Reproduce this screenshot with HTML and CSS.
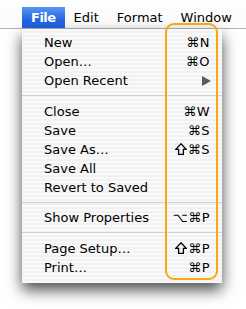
FILE: index.html
```html
<!DOCTYPE html>
<html lang="en">
<head>
    <meta charset="UTF-8">
    <meta name="viewport" content="width=device-width, initial-scale=1.0">
    <title>File menu</title>
    <link rel="stylesheet" href="styles.css">
</head>
<body>
    <div class="screen">
        <div class="menubar">
            <span class="title active">File</span>
            <span class="title">Edit</span>
            <span class="title">Format</span>
            <span class="title">Window</span>
        </div>

        <div class="menu">
            <div class="item"><span>New</span><span class="key">⌘N</span></div>
            <div class="item"><span>Open…</span><span class="key">⌘O</span></div>
            <div class="item"><span>Open Recent</span>
                <svg class="arrow" width="9" height="10" viewBox="0 0 9 10"><polygon points="0,0 9,5 0,10" /></svg>
            </div>
            <div class="sep"></div>
            <div class="item"><span>Close</span><span class="key">⌘W</span></div>
            <div class="item"><span>Save</span><span class="key">⌘S</span></div>
            <div class="item"><span>Save As…</span><span class="key"><svg class="shift" width="12" height="12" viewBox="0 0 12 12"><polygon points="6,0.8 11.2,6.4 8.4,6.4 8.4,11.3 3.6,11.3 3.6,6.4 0.8,6.4" /></svg>⌘S</span></div>
            <div class="item"><span>Save All</span></div>
            <div class="item"><span>Revert to Saved</span></div>
            <div class="sep"></div>
            <div class="item"><span>Show Properties</span><span class="key">⌥⌘P</span></div>
            <div class="sep"></div>
            <div class="item"><span>Page Setup…</span><span class="key"><svg class="shift" width="12" height="12" viewBox="0 0 12 12"><polygon points="6,0.8 11.2,6.4 8.4,6.4 8.4,11.3 3.6,11.3 3.6,6.4 0.8,6.4" /></svg>⌘P</span></div>
            <div class="item"><span>Print…</span><span class="key">⌘P</span></div>
        </div>

        <!-- highlight around the shortcut column -->
        <div class="callout"></div>
    </div>
</body>
</html>
```

FILE: styles.css
```css
body {
    margin: 0;
    background: #fff;
    font-family: "DejaVu Sans", Verdana, sans-serif;
    font-size: 13px;
    color: #000;
}

.screen {
    position: relative;
    width: 246px;
    height: 309px;
    overflow: hidden;
}

.menubar {
    display: flex;
    margin-top: 7px;
    height: 21px;
    line-height: 21px;
    padding-left: 22px;
    background: #fcfcfc;
    border-bottom: 1px solid #b4b4b4;
}
.menubar .title {
    padding: 0 9px;
    white-space: nowrap;
}
.menubar .active {
    padding: 0 9px;
    font-weight: bold;
    letter-spacing: -0.5px;
    color: #fff;
    background: linear-gradient(#5a97f2, #2466de 60%, #1c5cd6);
}

.menu {
    margin-left: 22px;
    width: 200px;
    box-sizing: border-box;
    padding: 4px 12px 6px 22px;
    background: repeating-linear-gradient(#f9f9f9 0 2px, #f1f1f1 2px 4px);
    box-shadow: 0 7px 14px rgba(0, 0, 0, 0.7);
}

.item {
    display: flex;
    justify-content: space-between;
    align-items: center;
    height: 19px;
    line-height: 19px;
    white-space: nowrap;
}
.key {
    display: flex;
    align-items: center;
    letter-spacing: 0.5px;
}
.shift {
    fill: none;
    stroke: #000;
    stroke-width: 1.3;
    stroke-linejoin: miter;
    margin-right: 1px;
    margin-top: -1px;
}
.arrow {
    fill: #5c5c5c;
    margin-right: -1px;
}

.sep {
    margin: 5px -12px 5.6px -22px;
    border-top: 1px solid #d2d2d2;
}

.callout {
    position: absolute;
    left: 165px;
    top: 23px;
    width: 53px;
    height: 257px;
    box-sizing: border-box;
    border: 2px solid #f8a80c;
    border-radius: 9px;
}
```
